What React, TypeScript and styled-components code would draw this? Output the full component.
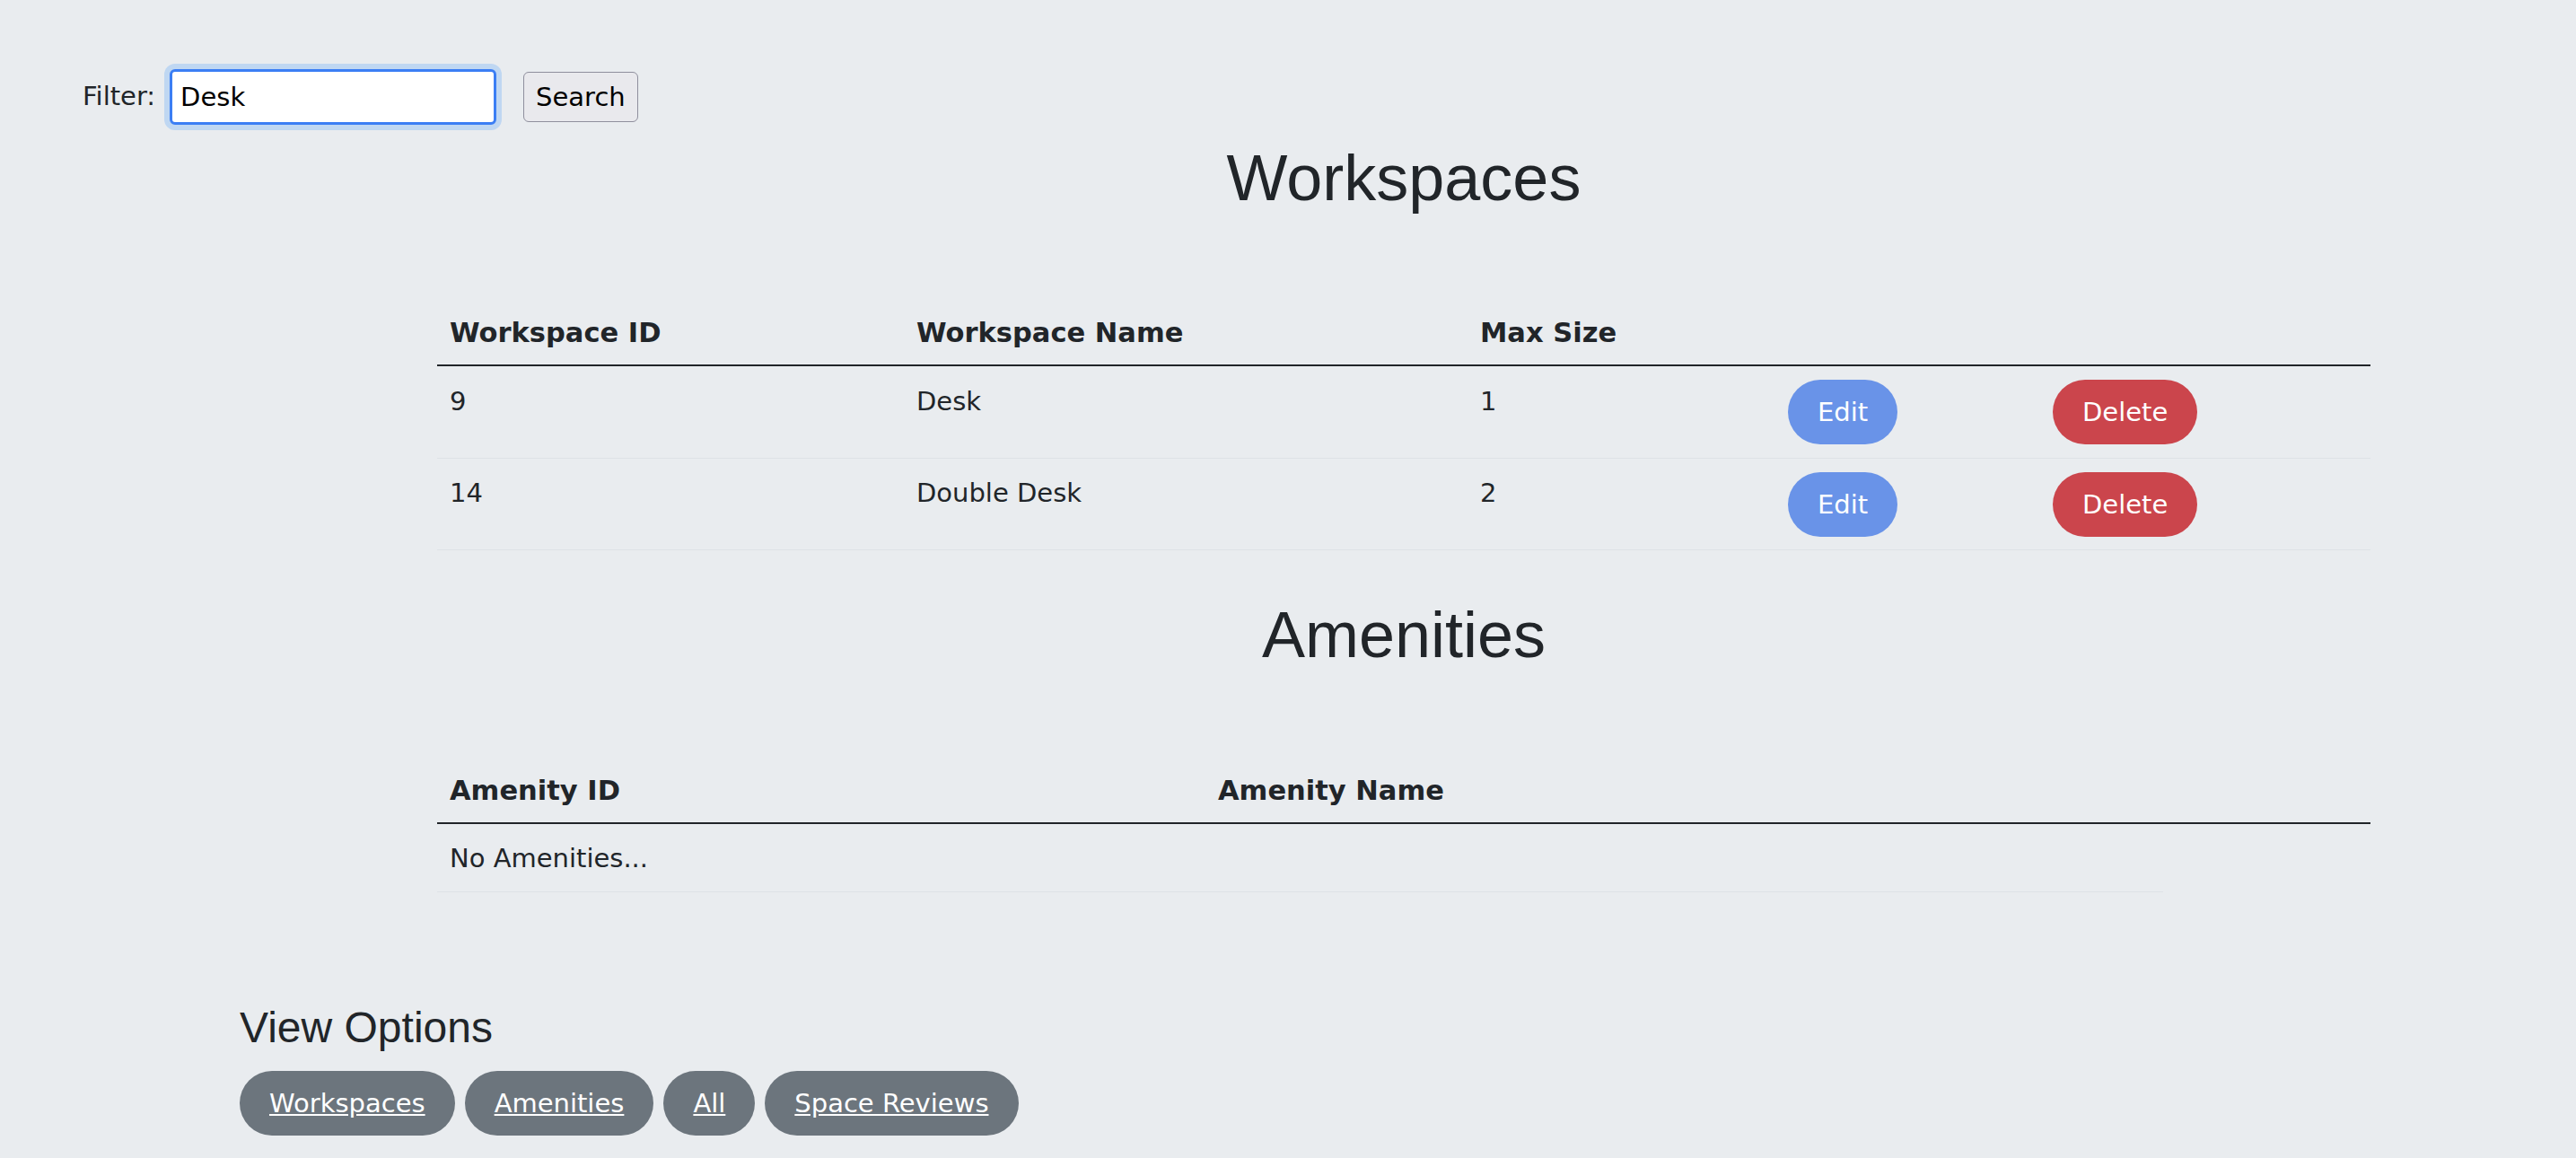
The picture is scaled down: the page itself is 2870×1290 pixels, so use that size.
import React, { useState } from 'react';
import styled, { createGlobalStyle } from 'styled-components';

const GlobalStyle = createGlobalStyle`
  * {
    box-sizing: border-box;
  }
  html, body {
    margin: 0;
    padding: 0;
    background: #e9ecef;
  }
  body {
    font-family: 'DejaVu Sans', Verdana, sans-serif;
    font-size: 29px;
    line-height: 1.5;
    color: #212529;
  }
`;

const Page = styled.div`
  min-height: 1290px;
  padding-top: 77px;
`;

const FilterBar = styled.form`
  display: flex;
  align-items: center;
  height: 62px;
  padding-left: 92px;
`;

const FilterLabel = styled.label`
  margin-right: 16px;
`;

const FilterInput = styled.input`
  width: 364px;
  height: 62px;
  padding: 0 9px;
  border: 3px solid #3b7ef4;
  border-radius: 6px;
  box-shadow: 0 0 0 6px #bfd7f2;
  background: #fff;
  color: #000;
  font: inherit;
  outline: none;
`;

const SearchButton = styled.button`
  height: 56px;
  margin-left: 30px;
  padding: 0 13px;
  border: 1px solid #8f8f9d;
  border-radius: 6px;
  background: #e9e9ed;
  color: #000;
  font-family: 'DejaVu Sans', Verdana, sans-serif;
  font-size: 29px;
  cursor: pointer;
`;

const Main = styled.main`
  width: 2154px;
  margin-left: 487px;
`;

const SectionTitle = styled.h1`
  margin: 16px 0 91px;
  font-family: 'Liberation Sans', Arial, sans-serif;
  font-size: 72px;
  font-weight: 400;
  line-height: 1.2;
  text-align: center;
`;

const Table = styled.table`
  width: 100%;
  table-layout: fixed;
  border-collapse: separate;
  border-spacing: 0;
  margin-bottom: 51px;
`;

const HeadCell = styled.th<{ $w: number }>`
  width: ${(p) => p.$w}px;
  padding: 17px 14px 13px;
  border-bottom: 2px solid #212529;
  text-align: left;
  font-size: 30.5px;
  font-weight: 700;
  line-height: 44px;
  vertical-align: bottom;
`;

const Cell = styled.td<{ $action?: boolean }>`
  padding: ${(p) => (p.$action ? '15px 14px 14.5px' : '17.5px 14px 14px')};
  border-bottom: 1px solid #dee2e6;
  vertical-align: top;
`;

const RowButton = styled.button<{ $tone: 'edit' | 'delete' }>`
  padding: 14px 33px;
  border: none;
  border-radius: 36px;
  background: ${(p) => (p.$tone === 'edit' ? '#6993e8' : '#cb454c')};
  color: #fff;
  font-family: 'DejaVu Sans', Verdana, sans-serif;
  font-size: 29px;
  line-height: 44px;
  cursor: pointer;
`;

const ViewOptions = styled.section`
  padding-left: 267px;
  margin-top: 122px;
`;

const OptionsTitle = styled.h2`
  margin: 0 0 20px;
  font-family: 'Liberation Sans', Arial, sans-serif;
  font-size: 48px;
  font-weight: 400;
  line-height: 1.2;
`;

const OptionsRow = styled.nav`
  display: flex;
  gap: 11px;
`;

const OptionLink = styled.a`
  display: inline-block;
  padding: 14px 33px;
  border-radius: 36px;
  background: #6c757d;
  color: #fff;
  line-height: 44px;
  text-decoration: underline;
`;

type Workspace = { id: number; name: string; maxSize: number };

const workspaces: Workspace[] = [
  { id: 9, name: 'Desk', maxSize: 1 },
  { id: 14, name: 'Double Desk', maxSize: 2 },
];

const viewOptions = ['Workspaces', 'Amenities', 'All', 'Space Reviews'];

export default function App() {
  const [filter, setFilter] = useState('Desk');

  return (
    <Page>
      <GlobalStyle />
      <FilterBar onSubmit={(e) => e.preventDefault()}>
        <FilterLabel htmlFor="filter">Filter:</FilterLabel>
        <FilterInput id="filter" value={filter} onChange={(e) => setFilter(e.target.value)} />
        <SearchButton type="submit">Search</SearchButton>
      </FilterBar>

      <Main>
        <SectionTitle>Workspaces</SectionTitle>
        <Table>
          <thead>
            <tr>
              <HeadCell $w={520}>Workspace ID</HeadCell>
              <HeadCell $w={628}>Workspace Name</HeadCell>
              <HeadCell $w={343}>Max Size</HeadCell>
              <HeadCell $w={295} />
              <HeadCell $w={368} />
            </tr>
          </thead>
          <tbody>
            {workspaces.map((w) => (
              <tr key={w.id}>
                <Cell>{w.id}</Cell>
                <Cell>{w.name}</Cell>
                <Cell>{w.maxSize}</Cell>
                <Cell $action>
                  <RowButton $tone="edit">Edit</RowButton>
                </Cell>
                <Cell $action>
                  <RowButton $tone="delete">Delete</RowButton>
                </Cell>
              </tr>
            ))}
          </tbody>
        </Table>

        <SectionTitle>Amenities</SectionTitle>
        <Table>
          <thead>
            <tr>
              <HeadCell $w={856}>Amenity ID</HeadCell>
              <HeadCell $w={1067}>Amenity Name</HeadCell>
              <HeadCell $w={231} />
            </tr>
          </thead>
          <tbody>
            <tr>
              <Cell colSpan={2}>No Amenities...</Cell>
            </tr>
          </tbody>
        </Table>
      </Main>

      <ViewOptions>
        <OptionsTitle>View Options</OptionsTitle>
        <OptionsRow>
          {viewOptions.map((o) => (
            <OptionLink key={o} href="#">
              {o}
            </OptionLink>
          ))}
        </OptionsRow>
      </ViewOptions>
    </Page>
  );
}
